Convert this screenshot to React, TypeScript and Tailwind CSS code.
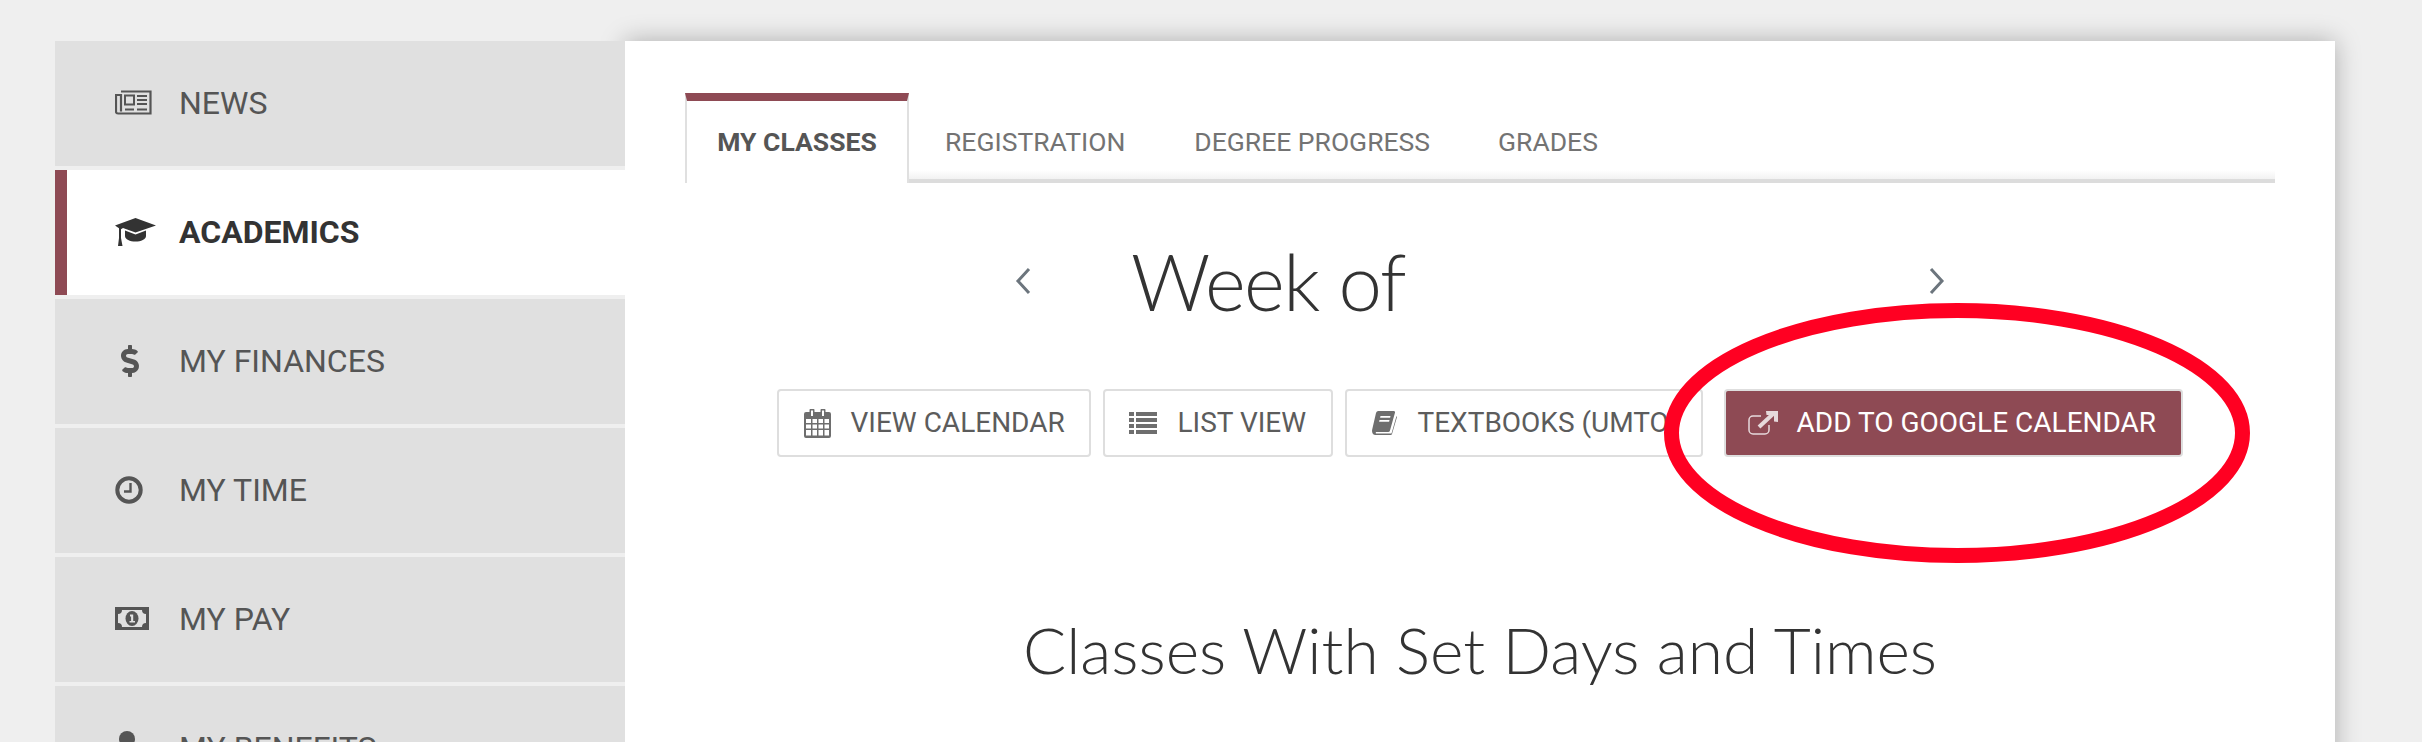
import type { ReactNode } from "react";
import { FaDollarSign } from "react-icons/fa";

const roboto = "font-['Roboto',sans-serif]";
const heading = "font-['Lato',sans-serif] font-light";

function NewsIcon() {
  return (
    <svg width="37" height="25" viewBox="0 0 37 25" fill="none" stroke="#555" strokeWidth="2.2">
      <path d="M6 1.5h29.5v22H3a2 2 0 0 1-2-2V5h5v16.5" />
      <rect x="10" y="5.5" width="9" height="9" strokeWidth="2" fill="#e0e0e0" />
      <path d="M22 6h10M22 10h10M22 14h10M10 19.5h9M22 19.5h10" />
    </svg>
  );
}

function CapIcon() {
  return (
    <svg width="41" height="28" viewBox="0 0 41 28" fill="#333">
      <path d="M20.5 0 41 7.5 20.5 14.5 8 10l-2 1.2V20l1.5 8H3l1-8v-9.700L0 7.500Z" />
      <path d="M10 12.500l10.500 4 10.500-4V18c0 3.500-5 5.500-10.500 5.500S10 21.500 10 18Z" />
    </svg>
  );
}

function ClockIcon() {
  return (
    <svg width="28" height="28" viewBox="0 0 28 28" fill="none" stroke="#555">
      <circle cx="14" cy="14" r="11.700" strokeWidth="4" />
      <path d="M15.500 7v8.500H9" strokeWidth="2.400" />
    </svg>
  );
}

function PayIcon() {
  return (
    <svg width="34" height="23" viewBox="0 0 34 23" fill="#555">
      <path
        fillRule="evenodd"
        d="M0 0h34v23H0ZM7 3a4 4 0 0 1-4 4v9a4 4 0 0 1 4 4h20a4 4 0 0 1 4-4V7a4 4 0 0 1-4-4Z"
      />
      <ellipse cx="17" cy="11.500" rx="6.500" ry="7.500" />
      <path d="M15 7.500h3.200v6.500H20v1.500h-5.500V14h1.600V9.500H15Z" fill="#e0e0e0" />
    </svg>
  );
}

function PersonIcon() {
  return (
    <svg width="24" height="34" viewBox="0 0 24 34" fill="#555">
      <circle cx="12" cy="8" r="8" />
      <path d="M0 34V24c0-5 3-8 7-8h10c4 0 7 3 7 8v10Z" />
    </svg>
  );
}

function CalendarIcon() {
  return (
    <svg width="27" height="29" viewBox="0 0 27 29" fill="#6e6e6e">
      <path
        fillRule="evenodd"
        d="M2 3h3.500V1.500a2 2 0 0 1 5 0V3h6V1.500a2 2 0 0 1 5 0V3H25a2 2 0 0 1 2 2v22a2 2 0 0 1-2 2H2a2 2 0 0 1-2-2V5a2 2 0 0 1 2-2Zm5 -1.500V7h2V1.500Zm11 0V7h2V1.500ZM2 10v4h5v-4Zm6.500 0v4H13v-4Zm6 0v4H19v-4Zm6 0v4H25v-4ZM2 15.500v4h5v-4Zm6.500 0v4H13v-4Zm6 0v4H19v-4Zm6 0v4H25v-4ZM2 21v5.500h5V21Zm6.500 0v5.500H13V21Zm6 0v5.500H19V21Zm6 0v5.500H25V21Z"
      />
    </svg>
  );
}

function ListIcon() {
  return (
    <svg width="28" height="22" viewBox="0 0 28 22" fill="#6e6e6e">
      <path d="M0 0h5v4H0ZM7 0h21v4H7ZM0 6h5v4H0ZM7 6h21v4H7ZM0 12h5v4H0ZM7 12h21v4H7ZM0 18h5v4H0ZM7 18h21v4H7Z" />
    </svg>
  );
}

function BookIcon() {
  return (
    <svg width="25" height="24" viewBox="0 0 25 24" fill="#6e6e6e">
      <path
        fillRule="evenodd"
        d="M6 0h15.500a1.500 1.500 0 0 1 1.400 2L18 19.500a2 2 0 0 1-2 1.500H4a1.500 1.500 0 0 0 0 1.600h15.500L24.500 5l.5 1-5 17a1.500 1.500 0 0 1-1.500 1H3.500C1 24-.500 21.500.200 18.500L4 2a2.500 2.500 0 0 1 2-2Zm2.500 5-.4 1.800h10l.4-1.800Zm-1 4-.4 1.800h10l.4-1.800Z"
      />
    </svg>
  );
}

function ExternalIcon() {
  return (
    <svg width="30" height="24" viewBox="0 0 30 24" fill="none" stroke="#e6d9db">
      <path d="M13 5H5a4 4 0 0 0-4 4v10a4 4 0 0 0 4 4h12a4 4 0 0 0 4-4v-5" strokeWidth="1.500" />
      <path d="M11 16 25 3" strokeWidth="4" />
      <path d="M18 0h12v11l-4-.5V4h-7.500Z" fill="#e6d9db" stroke="none" />
    </svg>
  );
}

function Chevron({ points }: { points: string }) {
  return (
    <svg width="16" height="28" viewBox="0 0 16 28" fill="none" stroke="#6c757d" strokeWidth="3">
      <polyline points={points} />
    </svg>
  );
}

const navItems: { label: string; icon: ReactNode; active?: boolean }[] = [
  { label: "NEWS", icon: <NewsIcon /> },
  { label: "ACADEMICS", icon: <CapIcon />, active: true },
  { label: "MY FINANCES", icon: <FaDollarSign size={32} color="#555" className="ml-[-1px]" /> },
  { label: "MY TIME", icon: <ClockIcon /> },
  { label: "MY PAY", icon: <PayIcon /> },
  { label: "MY BENEFITS", icon: <PersonIcon /> },
];

function Sidebar() {
  return (
    <nav className="relative z-10 flex w-[570px] shrink-0 flex-col gap-[4px] bg-[#efefef]">
      {navItems.map((item) =>
        item.active ? (
          <a
            key={item.label}
            className="flex h-[125px] shrink-0 items-center border-l-[12px] border-[#8e4a54] bg-white pb-[2px] pl-[48px] text-[32px] font-bold text-[#333]"
          >
            <span className="flex w-[64px] items-center">{item.icon}</span>
            {item.label}
          </a>
        ) : (
          <a
            key={item.label}
            className="flex h-[125px] shrink-0 items-center bg-[#e0e0e0] pb-[2px] pl-[60px] text-[32px] text-[#555]"
          >
            <span className="flex w-[64px] items-center">{item.icon}</span>
            {item.label}
          </a>
        ),
      )}
    </nav>
  );
}

function Tabs() {
  return (
    <div className="flex h-[90px] bg-[linear-gradient(to_bottom,#ffffff,#f2f2f2_70%,#dcdcdc_70%)] bg-[length:100%_13px] bg-bottom bg-no-repeat">
      <a className="flex w-[224px] items-center justify-center border-x-2 border-t-8 border-x-[#e0e0e0] border-t-[#8e4a54] bg-white text-[26.500px] font-bold text-[#555]">
        MY CLASSES
      </a>
      <div className="ml-[1px] flex h-[82px] translate-y-[8px] items-center text-[26.500px] text-[#737373]">
        <a className="px-[35px]">REGISTRATION</a>
        <a className="px-[34px]">DEGREE PROGRESS</a>
        <a className="px-[34px]">GRADES</a>
      </div>
    </div>
  );
}

function OutlineButton({ icon, label, className }: { icon: ReactNode; label: string; className: string }) {
  return (
    <button
      type="button"
      className={`flex h-[68px] items-center overflow-hidden whitespace-nowrap rounded-[4px] border-2 border-[#dedede] bg-white text-[28px] text-[#5c5c5c] ${className}`}
    >
      {icon}
      <span>{label}</span>
    </button>
  );
}

export default function App() {
  return (
    <div className={`flex h-[742px] w-full overflow-hidden bg-[#efefef] pl-[55px] pt-[41px] ${roboto}`}>
      <Sidebar />
      <main className="relative h-[760px] w-[1710px] shrink-0 bg-white px-[60px] pt-[52px] shadow-[0_0_24px_rgba(0,0,0,0.28)]">
        <Tabs />

        <div className="mx-auto mt-[48px] flex h-[100px] w-[930px] items-center text-[#333]">
          <Chevron points="14,2 3,14 14,26" />
          <h1 className={`ml-[100px] text-[78px] tracking-[-1.500px] ${heading}`}>Week of</h1>
          <span className="ml-auto">
            <Chevron points="2,2 13,14 2,26" />
          </span>
        </div>

        <div className="mt-[58px] flex justify-center pr-[1px]">
          <OutlineButton
            icon={<span className="ml-[25px] mr-[20px]"><CalendarIcon /></span>}
            label="VIEW CALENDAR"
            className="w-[314px]"
          />
          <OutlineButton
            icon={<span className="ml-[24px] mr-[21px]"><ListIcon /></span>}
            label="LIST VIEW"
            className="ml-[12px] w-[230px]"
          />
          <OutlineButton
            icon={<span className="ml-[25px] mr-[21px]"><BookIcon /></span>}
            label="TEXTBOOKS (UMTO"
            className="ml-[12px] w-[358px]"
          />
          <button
            type="button"
            className="ml-[21px] flex h-[68px] w-[459px] items-center whitespace-nowrap rounded-[4px] border-2 border-[#dedede] bg-[#8e4a54] text-[28px] text-white"
          >
            <span className="ml-[22px] mr-[19px]"><ExternalIcon /></span>
            ADD TO GOOGLE CALENDAR
          </button>
        </div>

        <h2 className={`mt-[153px] text-center text-[64px] leading-[80px] text-[#333] ${heading}`}>
          Classes With Set Days and Times
        </h2>

        {/* red marker ring drawn over the screenshot */}
        <svg
          width="586"
          height="260"
          viewBox="0 0 586 260"
          fill="none"
          className="absolute left-[1039px] top-[262px]"
        >
          <ellipse cx="293" cy="130" rx="285.500" ry="122.500" stroke="#ff0022" strokeWidth="15" />
        </svg>
      </main>
    </div>
  );
}
